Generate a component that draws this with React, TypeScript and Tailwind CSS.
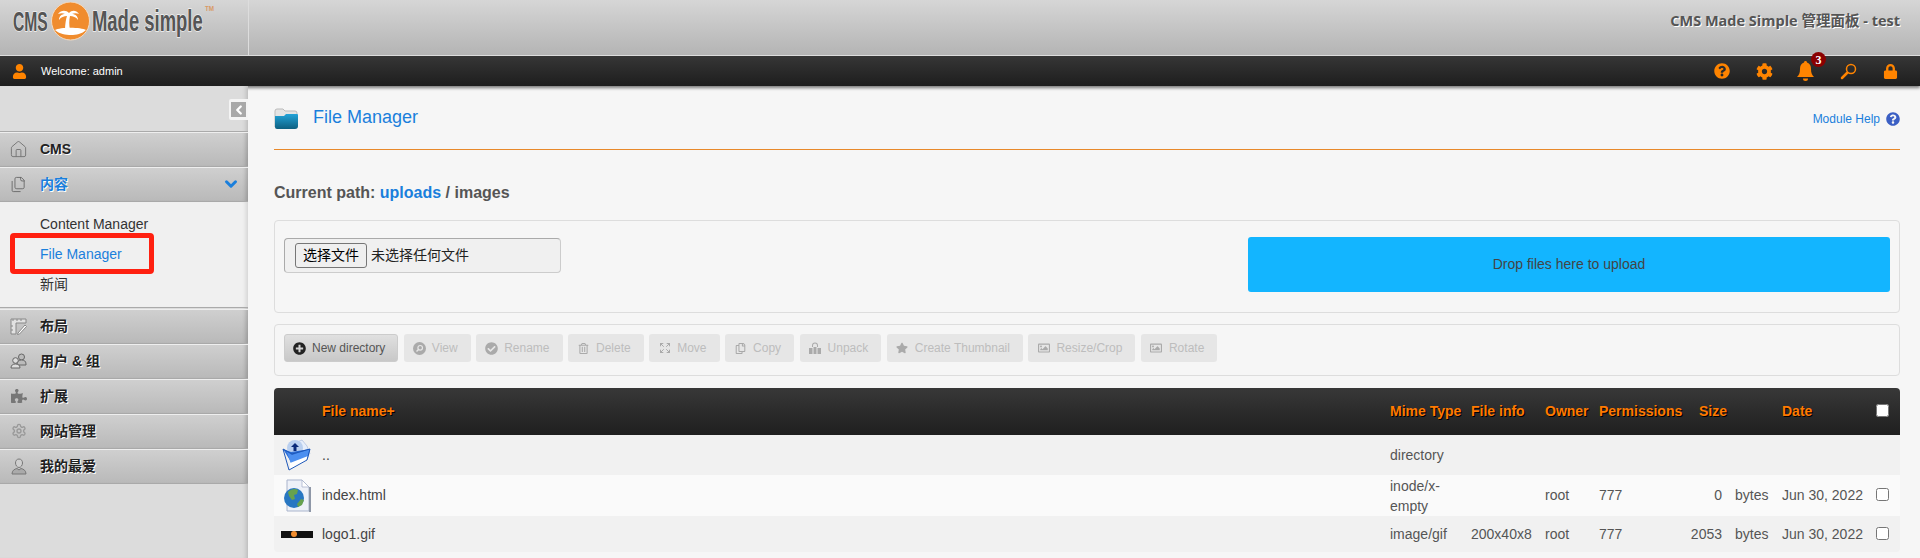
import type { ReactNode } from "react";
import {
  FaCheckCircle,
  FaCog,
  FaLock,
  FaPlusCircle,
  FaPuzzlePiece,
  FaQuestionCircle,
  FaRegCopy,
  FaRegImage,
  FaRegTrashAlt,
  FaStar,
  FaUser,
} from "react-icons/fa";
import { LuExpand, LuHouse, LuSettings, LuFiles } from "react-icons/lu";
import { ChevronDown, ChevronLeft } from "lucide-react";

const sans = "[font-family:'Liberation_Sans','Noto_Sans_CJK_SC',sans-serif]";

function Logo() {
  return (
    <svg width="206" height="42" viewBox="0 0 206 42" className="ml-[12px] mt-[2px] shrink-0">
      <g
        fontFamily="'Liberation Sans', sans-serif"
        fontWeight="700"
        fill="#555"
        stroke="#f2f2f2"
        strokeWidth="1.400"
        paintOrder="stroke"
      >
        <text transform="translate(1 29) scale(0.58 1)" fontSize="27">
          CMS
        </text>
        <text transform="translate(80 29) scale(0.615 1)" fontSize="30">
          Made simple
        </text>
      </g>
      <text
        transform="translate(193 9) scale(0.9 1)"
        fontFamily="'Liberation Sans', sans-serif"
        fontWeight="700"
        fontSize="7"
        fill="#d99a66"
      >
        TM
      </text>
      <circle cx="58.500" cy="19" r="19" fill="#f08c2e" stroke="#f3dcc4" strokeWidth="1" />
      <path
        d="M57 11c-3-3-8-3-11 1 3-1 5-1 7 0-3 0-6 2-6 6 2-3 5-4 8-4-1 3-2 8-2 14h5c-1-5-1-10 0-14 3 0 6 1 8 4 0-4-3-6-6-6 2-1 5-1 7 0-3-4-7-4-10-1z"
        fill="#fff"
      />
      <path d="M43 28c5-3 26-3 31 0-4 4-10 5-15 5s-12-1-16-5z" fill="#fff" />
    </svg>
  );
}

type MenuItem = { label: string; icon: ReactNode };

function MenuRow({ label, icon, active }: { label: string; icon: ReactNode; active?: boolean }) {
  return (
    <div className="flex h-[35px] items-center border-b border-[#a9a9a9] bg-gradient-to-b from-[#d0d0d0] to-[#b9b9b9] text-[14px] font-bold [box-shadow:inset_0_1px_0_#eee,inset_-5px_0_4px_-3px_rgba(0,0,0,0.2)] [text-shadow:1px_1px_0_#fff]">
      <span className="flex w-[40px] justify-center pr-[3px]">{icon}</span>
      <span className={active ? "text-[#1a7fdc]" : "text-[#222]"}>{label}</span>
      {active && <ChevronDown className="ml-auto mr-[8px] text-[#1a7fdc]" size={18} strokeWidth={4} />}
    </div>
  );
}

function LayoutIcon() {
  return (
    <svg width="17" height="17" viewBox="0 0 17 17" fill="#e2e2e2" stroke="#888" strokeWidth="1">
      <path d="M1 1h15v4H6v11H1z" />
      <path d="M3 1v2M7 1v2M11 1v2M1 8h2M1 12h2" fill="none" />
      <path d="M8 15l7-8 1.500 1.500-7 7.500-2 .5z" fill="#fff" />
    </svg>
  );
}

function UsersIcon() {
  return (
    <svg width="17" height="16" viewBox="0 0 17 16" fill="#bbb" stroke="#666" strokeWidth="1">
      <circle cx="11.500" cy="4" r="3" />
      <path d="M7 11c0-3 2-4 4.500-4s4.500 1 4.500 4v1H7z" />
      <circle cx="5.500" cy="7.500" r="2.800" fill="#ddd" />
      <path d="M1 15c0-3 2-4 4.500-4s4.500 1 4.500 4z" fill="#ddd" />
    </svg>
  );
}

function PersonIcon() {
  return (
    <svg width="16" height="17" viewBox="0 0 16 17" fill="#cfcfcf" stroke="#777" strokeWidth="1">
      <path d="M8 1c2.500 0 3.500 2 3.500 4S10 9.500 8 9.500 4.500 7 4.500 5 5.500 1 8 1z" />
      <path d="M1 16c0-3.500 2.500-5 5-5.500L8 12l2-1.500c2.500.5 5 2 5 5.500z" fill="#aaa" />
    </svg>
  );
}

function Sidebar() {
  const lower: MenuItem[] = [
    { label: "布局", icon: <LayoutIcon /> },
    { label: "用户 & 组", icon: <UsersIcon /> },
    { label: "扩展", icon: <FaPuzzlePiece size={16} color="#777" /> },
    { label: "网站管理", icon: <LuSettings size={16} color="#999" /> },
    { label: "我的最爱", icon: <PersonIcon /> },
  ];

  return (
    <aside className="flex w-[248px] shrink-0 flex-col bg-[#dcdcdc] [box-shadow:inset_-5px_0_4px_-3px_rgba(0,0,0,0.15)]">
      <div className="flex h-[45px] justify-end pt-[13px]">
        <div className="flex h-[21px] w-[19px] items-center justify-center rounded-l-[2px] bg-[#f4f4f4]">
          <span className="flex h-[15px] w-[15px] items-center justify-center bg-[#a8a8a8]">
            <ChevronLeft size={14} color="#fff" strokeWidth={4} />
          </span>
        </div>
      </div>
      <div className="border-t border-[#aaa]">
        <MenuRow label="CMS" icon={<LuHouse size={19} strokeWidth={1.25} color="#777" />} />
        <MenuRow label="内容" active icon={<LuFiles size={17} strokeWidth={1.25} color="#666" />} />
      </div>
      <div className="relative flex h-[106px] flex-col border-b border-[#aaa] bg-[#f0f0f0] pl-[40px] pt-[7px] text-[14px] leading-[30px] text-[#333] [box-shadow:inset_-5px_0_4px_-3px_rgba(0,0,0,0.12)]">
        <span>Content Manager</span>
        <span className="text-[#1a7fdc]">File Manager</span>
        <span>新闻</span>
        <div className="absolute left-[10px] top-[31px] h-[41px] w-[144px] rounded-[4px] border-[5px] border-[#ff2010]" />
      </div>
      <div className="pt-[1px]">
        {lower.map((item) => (
          <MenuRow key={item.label} label={item.label} icon={item.icon} />
        ))}
      </div>
    </aside>
  );
}

function ViewIcon() {
  return (
    <svg width="13" height="13" viewBox="0 0 13 13">
      <circle cx="6.500" cy="6.500" r="6.500" fill="#aaa" />
      <circle cx="7.200" cy="5.800" r="2.300" fill="none" stroke="#e6e6e6" strokeWidth="1.200" />
      <path d="M5.500 7.500 3.500 9.500" stroke="#e6e6e6" strokeWidth="1.500" />
    </svg>
  );
}

function UnpackIcon() {
  return (
    <svg width="12" height="12" viewBox="0 0 12 12" fill="#aaa">
      <path d="M3 5V3.500a3 3 0 0 1 6 0V5H8V3.500a2 2 0 0 0-4 0V5z" />
      <path d="M0 6h3.500v6H0zM4.500 5h3v7h-3zM8.500 6H12v6H8.500z" />
    </svg>
  );
}

type ToolButton = { label: string; icon: ReactNode };

const tools: ToolButton[] = [
  { label: "View", icon: <ViewIcon /> },
  { label: "Rename", icon: <FaCheckCircle size={13} /> },
  { label: "Delete", icon: <FaRegTrashAlt size={11} /> },
  { label: "Move", icon: <LuExpand size={12} /> },
  { label: "Copy", icon: <FaRegCopy size={11} /> },
  { label: "Unpack", icon: <UnpackIcon /> },
  { label: "Create Thumbnail", icon: <FaStar size={12} /> },
  { label: "Resize/Crop", icon: <FaRegImage size={12} /> },
  { label: "Rotate", icon: <FaRegImage size={12} /> },
];

function FolderUpIcon() {
  return (
    <svg width="30" height="32" viewBox="0 0 30 32">
      <path d="M8 6 20 1l5 6 3 8-17 5z" fill="#e6eefb" stroke="#9fb4d8" strokeWidth="0.6" />
      <circle cx="13" cy="9" r="8" fill="#b9cfef" />
      <path d="M13 4l4 4h-2.500v4h-3V8H9z" fill="#0b2a7a" />
      <path d="M1 10l8 3 19-3-2 9-17 4z" fill="#2f6fd6" />
      <path d="M5 13l5 3 18-6-3 10-16 5z" fill="#4c8ff0" />
      <path d="M8 24l18-7-2 5-16 9z" fill="#fff" />
      <path d="M7 31 1 10l9 5 18-5-3 11z" fill="none" stroke="#1d57b8" strokeWidth="1" />
    </svg>
  );
}

function GlobeDocIcon() {
  return (
    <svg width="28" height="33" viewBox="0 0 28 33">
      <path d="M4 1h15l7 7v24H4z" fill="#eef1f8" stroke="#a9b4cc" strokeWidth="1" />
      <path d="M19 1v7h7z" fill="#fff" stroke="#a9b4cc" strokeWidth="0.8" />
      <rect x="26" y="8" width="2" height="25" fill="#8f98a8" />
      <circle cx="11" cy="19" r="10" fill="#2877c2" />
      <path d="M5 13c3-3 7-4 10-2l-1 4-3 1 1 4-3 1-3-4zM14 25l4-5 3 1-2 5-4 2z" fill="#67a24e" />
    </svg>
  );
}

function LogoThumb() {
  return (
    <div className="flex h-[7px] w-[32px] items-center justify-center bg-[#111]">
      <span className="mr-[6px] h-[6px] w-[6px] rounded-full bg-[#f08c2e]" />
    </div>
  );
}

type FileRow = {
  name: string;
  icon: ReactNode;
  mime: string;
  info?: string;
  owner?: string;
  perms?: string;
  size?: string;
  unit?: string;
  date?: string;
  check?: boolean;
  height: string;
  bg: string;
};

const rows: FileRow[] = [
  { name: "..", icon: <FolderUpIcon />, mime: "directory", height: "h-[40px]", bg: "bg-[#f1f1f1]" },
  {
    name: "index.html",
    icon: <GlobeDocIcon />,
    mime: "inode/x-empty",
    owner: "root",
    perms: "777",
    size: "0",
    unit: "bytes",
    date: "Jun 30, 2022",
    check: true,
    height: "h-[41px]",
    bg: "bg-[#fafafa]",
  },
  {
    name: "logo1.gif",
    icon: <LogoThumb />,
    mime: "image/gif",
    info: "200x40x8",
    owner: "root",
    perms: "777",
    size: "2053",
    unit: "bytes",
    date: "Jun 30, 2022",
    check: true,
    height: "h-[36px]",
    bg: "bg-[#f1f1f1]",
  },
];

function FileTable() {
  const th = "p-0 text-left text-[14px] font-bold text-[#ff7a00] [text-shadow:1px_1px_0_#000]";
  return (
    <div className="mt-[12px] overflow-hidden rounded-[4px]">
      <table className="w-full table-fixed border-collapse text-[14px] text-[#555]">
        <colgroup>
          <col className="w-[48px]" />
          <col />
          <col className="w-[81px]" />
          <col className="w-[74px]" />
          <col className="w-[54px]" />
          <col className="w-[81px]" />
          <col className="w-[55px]" />
          <col className="w-[47px]" />
          <col className="w-[94px]" />
          <col className="w-[24px]" />
        </colgroup>
        <thead>
          <tr className="h-[47px] bg-gradient-to-b from-[#383838] to-[#1f1f1f]">
            <th />
            <th className={th}>File name+</th>
            <th className={`${th} whitespace-nowrap`}>Mime Type</th>
            <th className={th}>File info</th>
            <th className={th}>Owner</th>
            <th className={th}>Permissions</th>
            <th className={`${th} pl-[19px]`}>Size</th>
            <th />
            <th className={th}>Date</th>
            <th className="p-0 text-left">
              <input type="checkbox" className="mb-[3px] block" />
            </th>
          </tr>
        </thead>
        <tbody>
          {rows.map((row) => (
            <tr key={row.name} className={`${row.height} ${row.bg}`}>
              <td className="p-0">
                <div className="flex justify-center pr-[2px]">{row.icon}</div>
              </td>
              <td className="p-0 text-[#444]">{row.name}</td>
              <td className="p-0 leading-[20px]">{row.mime}</td>
              <td className="p-0">{row.info}</td>
              <td className="p-0">{row.owner}</td>
              <td className="p-0">{row.perms}</td>
              <td className="p-0 pr-[13px] text-right">{row.size}</td>
              <td className="p-0">{row.unit}</td>
              <td className="whitespace-nowrap p-0">{row.date}</td>
              <td className="p-0">{row.check && <input type="checkbox" className="mb-[2px] block" />}</td>
            </tr>
          ))}
        </tbody>
      </table>
    </div>
  );
}

function Main() {
  return (
    <main className="min-w-0 flex-1 pl-[26px] pr-[20px]">
      <div className="flex h-[64px] items-start border-b border-[#e8892a] pt-[21px]">
        <svg width="24" height="21" viewBox="0 0 24 21" className="mt-[1px] shrink-0">
          <path d="M1 3q0-2 2-2h6l2 2h10q2 0 2 2v14H1z" fill="#e4e4e4" stroke="#bbb" />
          <defs>
            <linearGradient id="folderBlue" x1="0" y1="0" x2="0" y2="1">
              <stop offset="0" stopColor="#22a3d8" />
              <stop offset="1" stopColor="#0d5f80" />
            </linearGradient>
          </defs>
          <path d="M1 8h9l2-2h11q1 0 1 1v11q0 3-3 3H3q-2 0-2-2z" fill="url(#folderBlue)" />
        </svg>
        <h1 className="ml-[15px] text-[18px] leading-[20px] text-[#1a7fdc]">File Manager</h1>
        <div className="ml-auto mt-[3px] flex items-center text-[12px] text-[#1a7fdc]">
          Module Help
          <FaQuestionCircle className="ml-[6px]" size={14} color="#3b5fc4" />
        </div>
      </div>

      <p className="mt-[33px] text-[16px] font-bold leading-[20px] text-[#555]">
        Current path: <span className="text-[#1a7fdc]">uploads</span> / images
      </p>

      <section className="mt-[17px] flex h-[93px] items-start justify-between rounded-[4px] border border-[#ddd] pl-[9px] pr-[9px] pt-[17px]">
        <div className="flex h-[35px] w-[277px] items-center rounded-[4px] border border-[#ccc] border-l-[#aaa] border-t-[#aaa] bg-[#f0f0f0] pl-[10px] text-[14px] text-[#222]">
          <span className="flex h-[25px] w-[72px] items-center justify-center rounded-[3px] border border-[#767676] bg-[#efefef] text-black">
            选择文件
          </span>
          <span className="ml-[4px]">未选择任何文件</span>
        </div>
        <div className="mt-[-1px] flex h-[55px] w-[642px] items-center justify-center rounded-[3px] bg-[#13b5ff] text-[14px] text-[#444]">
          Drop files here to upload
        </div>
      </section>

      <section className="mt-[11px] flex h-[52px] gap-[5.5px] rounded-[4px] border border-[#ddd] pl-[9px] pt-[9px] text-[12px]">
        <button
          type="button"
          className="flex h-[28px] items-center gap-[6px] rounded-[3px] border border-[#ccc] bg-gradient-to-b from-[#e0e0e0] to-[#c8c8c8] pl-[8px] pr-[12px] text-[#555]"
        >
          <FaPlusCircle size={13} color="#222" />
          New directory
        </button>
        {tools.map((tool) => (
          <button
            key={tool.label}
            type="button"
            className="flex h-[28px] items-center gap-[6px] rounded-[3px] bg-[#e6e6e6] pl-[9px] pr-[13px] text-[#bdbdbd]"
          >
            <span className="flex w-[13px] justify-center text-[#aaa]">{tool.icon}</span>
            {tool.label}
          </button>
        ))}
      </section>

      <FileTable />
    </main>
  );
}

export default function App() {
  return (
    <div className={`flex h-screen flex-col overflow-hidden bg-[#f6f6f6] ${sans}`}>
      <header className="flex h-[56px] shrink-0 border-b border-[#e4e4e4] bg-gradient-to-b from-[#d6d6d6] to-[#b4b4b4]">
        <div className="w-[249px] shrink-0 border-r border-[#ddd]">
          <Logo />
        </div>
        <div className="flex-1 pr-[20px] pt-[10px] text-right font-['Open_Sans','Noto_Sans_CJK_SC',sans-serif] text-[14.5px] font-bold text-[#555] [text-shadow:1px_1px_0_#fff]">
          CMS Made Simple 管理面板 - test
        </div>
      </header>

      <nav className="flex h-[30px] shrink-0 items-center bg-gradient-to-b from-[#363636] to-[#1e1e1e] text-[#ff8400] [box-shadow:0_2px_3px_rgba(0,0,0,0.5)]">
        <FaUser className="ml-[12px]" size={15} />
        <span className="ml-[14px] text-[11px] text-white">Welcome: admin</span>
        <div className="ml-auto flex items-center pr-[22px]">
          <FaQuestionCircle size={16} />
          <FaCog className="ml-[26px]" size={17} />
          <span className="relative ml-[24px]">
            <svg width="17" height="20" viewBox="0 0 17 20" fill="currentColor" className="block">
              <path d="M8.500 0c1 0 1.500.7 1.500 1.600C13 2.400 14 5 14 8c0 4 1 6 3 8H0c2-2 3-4 3-8 0-3 1-5.600 4-6.400C7 .7 7.500 0 8.500 0z" />
              <path d="M6 17.500h5a2.500 2.500 0 0 1-5 0z" />
            </svg>
            <span className="absolute left-[14px] top-[-9px] flex h-[15px] w-[15px] items-center justify-center rounded-full bg-[#8b0000] font-['Liberation_Serif',serif] text-[12px] font-bold text-white">
              3
            </span>
          </span>
          <svg width="17" height="17" viewBox="0 0 17 17" fill="none" stroke="currentColor" className="ml-[26px]">
            <circle cx="11" cy="6" r="4.500" strokeWidth="1.500" />
            <path d="M7 10l-5 5" strokeWidth="2.500" strokeLinecap="round" />
          </svg>
          <FaLock className="ml-[26px]" size={15} />
        </div>
      </nav>

      <div className="flex min-h-0 flex-1">
        <Sidebar />
        <Main />
      </div>
    </div>
  );
}
